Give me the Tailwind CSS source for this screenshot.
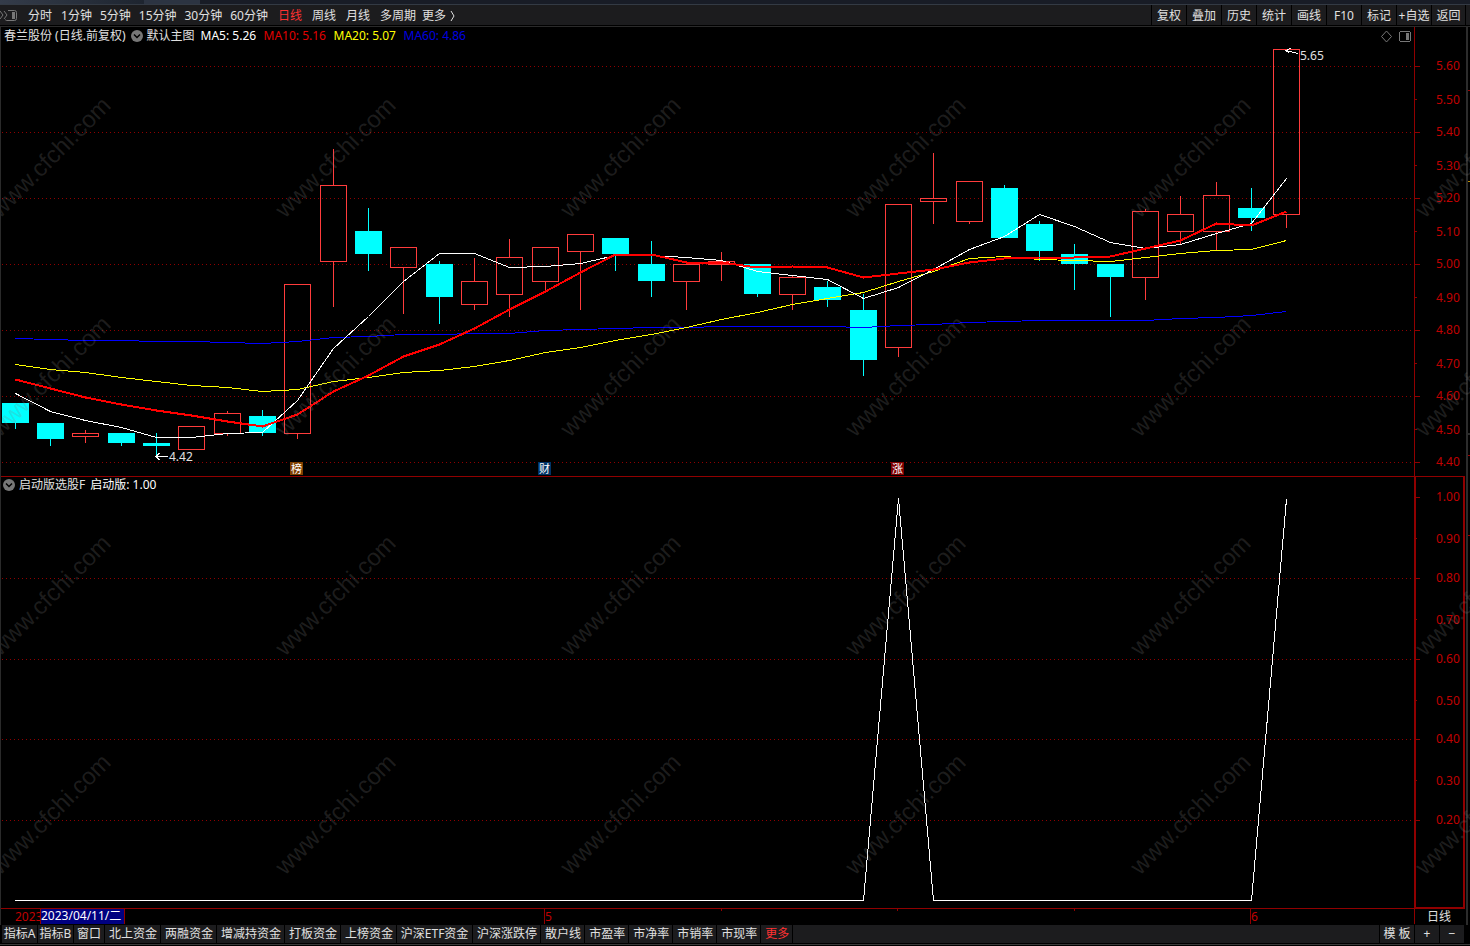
<!DOCTYPE html>
<html lang="zh-CN">
<head>
    <meta charset="UTF-8">
    <meta name="viewport" content="width=device-width, initial-scale=1.0">
    <title>春兰股份 日线</title>
    <script src="https://cdn.jsdelivr.net/npm/@tailwindcss/browser@4"></script>
</head>
<body class="min-h-screen bg-black text-[#e0e0e0] text-[12px] leading-[16px] font-['Noto_Sans','Noto_Sans_CJK_SC',sans-serif] overflow-x-hidden">
    <div class="h-[5px] bg-[#181c26] border-b border-[#333a44] flex">
        <div class="w-36 bg-linear-to-r from-[#343c4a] to-[#1e2530]"></div>
        <div class="w-14 bg-[#2c3442]"></div>
    </div>

    <header class="h-[21px] bg-[#1c1c1e] flex items-center justify-between border-b border-black pr-1">
        <nav class="flex items-center gap-[10px] pt-px whitespace-nowrap">
            <div class="flex items-center gap-2">
                <button type="button" aria-label="侧栏" class="w-5">
                    <svg class="w-5 h-4" viewBox="0 0 20 16" fill="none" stroke="#777">
                        <path d="M0 3l3 4-3 4M4 3l3 4-3 4"/>
                        <path d="M8 2.500h6.500q2 0 2 2v6q0 2-2 2h-8q-1 0-1-1"/>
                        <path d="M12 4h3v7h-3z" fill="#777" stroke="none"/>
                    </svg>
                </button>
                <button type="button" class="mr-px">分时</button>
                <button type="button">1分钟</button>
                <button type="button">5分钟</button>
                <button type="button">15分钟</button>
                <button type="button">30分钟</button>
                <button type="button">60分钟</button>
            </div>
            <button type="button" class="text-[#ff3232]">日线</button>
            <button type="button">周线</button>
            <button type="button">月线</button>
            <button type="button">多周期</button>
            <button type="button" class="-ml-1 flex items-center gap-1">更多
                <svg class="w-2 h-3" viewBox="0 0 8 12" fill="none" stroke="#e0e0e0"><path d="M1 1l3 5-3 5"/></svg>
            </button>
        </nav>
        <div class="flex h-full whitespace-nowrap">
            <button type="button" class="w-[35px] pt-px border-l border-black">复权</button>
            <button type="button" class="w-[35px] pt-px border-l border-black">叠加</button>
            <button type="button" class="w-[35px] pt-px border-l border-black">历史</button>
            <button type="button" class="w-[35px] pt-px border-l border-black">统计</button>
            <button type="button" class="w-[35px] pt-px border-l border-black">画线</button>
            <button type="button" class="w-[35px] pt-px border-l border-black">F10</button>
            <button type="button" class="w-[35px] pt-px border-l border-black">标记</button>
            <button type="button" class="w-[35px] pt-px border-l border-black">+自选</button>
            <button type="button" class="w-[35px] pt-px border-x border-black">返回</button>
        </div>
    </header>

    <main class="relative flex border-t border-l border-[#2a2a2a]">
        <div class="flex-1 min-w-0">
            <section class="relative">
                <div class="absolute inset-x-0 top-0 flex items-center pl-[3px] h-[18px] whitespace-nowrap">
                    <h1>春兰股份 (日线.前复权)</h1>
                    <button type="button" aria-label="主图菜单" class="ml-[5px] mr-1">
                        <svg class="w-3 h-3" viewBox="0 0 12 12"><circle cx="6" cy="6" r="6" fill="#777"/><path d="M3 4.500l3 3 3-3" fill="none" stroke="#000" stroke-width="1.500"/></svg>
                    </button>
                    <span class="w-[54px]">默认主图</span>
                    <span class="w-[63px] text-white">MA5: 5.26</span>
                    <span class="w-[70px] text-[#e00000]">MA10: 5.16</span>
                    <span class="w-[70px] text-[#ffff00]">MA20: 5.07</span>
                    <span class="w-[70px] text-[#0000e0]">MA60: 4.86</span>
                </div>
                <svg id="price" class="block w-full h-auto" viewBox="1 27 1465 450"></svg>
            </section>
            <section class="relative">
                <div class="absolute inset-x-0 top-0 flex items-center pl-[2px] h-4 whitespace-nowrap">
                    <button type="button" aria-label="指标菜单" class="mr-1">
                        <svg class="w-3 h-3" viewBox="0 0 12 12"><circle cx="6" cy="6" r="6" fill="#777"/><path d="M3 4.500l3 3 3-3" fill="none" stroke="#000" stroke-width="1.500"/></svg>
                    </button>
                    <h2 class="mr-[5px]">启动版选股F</h2>
                    <span class="text-white">启动版: 1.00</span>
                </div>
                <svg id="signal" class="block w-full h-auto" viewBox="1 477 1465 448"></svg>
            </section>
        </div>
        <svg class="w-1 shrink-0" viewBox="0 0 4 898" preserveAspectRatio="none" shape-rendering="crispEdges">
            <path d="M0 0h2v898h-2z" fill="#2c2c2c"/>
            <path d="M2 63h2v1h-2zM2 428h2v1h-2zM2 508h2v1h-2z" fill="#a00000"/>
            <path d="M2 154h2v1h-2z" fill="#c09000"/>
            <path d="M2 406h2v2h-2z" fill="#2c2c2c"/>
        </svg>
        <svg id="watermark" class="absolute inset-0 w-full h-full pointer-events-none" viewBox="1 27 1469 898" aria-hidden="true"></svg>
    </main>

    <footer class="flex h-5 pl-[2px] pr-[6px] border-b border-[#3a3a3a] bg-black whitespace-nowrap">
        <div class="flex flex-1 h-[18px] bg-[#1c1c1e]">
            <button type="button" class="w-9 border-r border-black">指标A</button>
            <button type="button" class="w-9 border-r border-black">指标B</button>
            <button type="button" class="px-[3px] border-r border-black">窗口</button>
            <button type="button" class="pl-1 pr-[3px] border-r border-black">北上资金</button>
            <button type="button" class="pl-1 pr-[3px] border-r border-black">两融资金</button>
            <button type="button" class="pl-1 pr-[3px] border-r border-black">增减持资金</button>
            <button type="button" class="pl-1 pr-[3px] border-r border-black">打板资金</button>
            <button type="button" class="pl-1 pr-[3px] border-r border-black">上榜资金</button>
            <button type="button" class="w-[76px] border-r border-black">沪深ETF资金</button>
            <button type="button" class="pl-1 pr-[3px] border-r border-black">沪深涨跌停</button>
            <button type="button" class="pl-1 pr-[3px] border-r border-black">散户线</button>
            <button type="button" class="pl-1 pr-[3px] border-r border-black">市盈率</button>
            <button type="button" class="pl-1 pr-[3px] border-r border-black">市净率</button>
            <button type="button" class="pl-1 pr-[3px] border-r border-black">市销率</button>
            <button type="button" class="pl-1 pr-[3px] border-r border-black">市现率</button>
            <button type="button" class="pl-1 pr-[3px] border-r border-black text-[#ff3232]">更多</button>
            <button type="button" class="ml-auto w-9 border-x border-black">模 板</button>
            <button type="button" class="w-[25px] border-r border-black">+</button>
            <button type="button" class="w-6">−</button>
        </div>
    </footer>

    <script>
        // left edge, body top, body bottom, high, low, 1 = up
        const candles = [
            [2, 403, 423, 403, 429, 0], [37, 423, 439, 423, 446, 0], [72, 433, 436, 430, 443, 1],
            [108, 433, 443, 433, 446, 0], [143, 443, 446, 433, 456, 0], [178, 426, 449, 426, 449, 1],
            [214, 413, 433, 411, 436, 1], [249, 416, 433, 410, 436, 0], [284, 284, 433, 284, 439, 1],
            [320, 185, 261, 149, 307, 1], [355, 231, 254, 208, 271, 0], [390, 247, 267, 247, 314, 1],
            [426, 264, 297, 261, 324, 0], [461, 281, 304, 258, 310, 1], [496, 257, 294, 239, 317, 1],
            [532, 247, 281, 247, 293, 1], [567, 234, 251, 234, 310, 1], [602, 238, 254, 238, 271, 0],
            [638, 264, 281, 241, 297, 0], [673, 264, 281, 264, 310, 1], [708, 261, 264, 252, 281, 1],
            [744, 264, 294, 264, 297, 0], [779, 277, 294, 275, 310, 1], [814, 287, 300, 281, 307, 0],
            [850, 310, 360, 294, 376, 0], [885, 204, 347, 204, 357, 1], [920, 198, 201, 153, 224, 1],
            [956, 181, 221, 181, 224, 1], [991, 188, 238, 185, 238, 0], [1026, 224, 251, 221, 261, 0],
            [1061, 254, 264, 244, 290, 0], [1097, 264, 277, 264, 317, 0], [1132, 211, 277, 209, 300, 1],
            [1167, 214, 231, 196, 244, 1], [1203, 195, 231, 182, 250, 1], [1238, 208, 218, 188, 231, 0],
            [1273, 49, 214, 49, 228, 1]
        ];
        const ma5 = [393, 411, 420, 427, 437, 437, 433, 432, 400, 348, 316, 281, 253, 253, 267, 266, 263, 255, 255, 257, 260, 271, 275, 279, 298, 287, 269, 249, 236, 214, 226, 242, 248, 244, 233, 223, 178];
        const ma10 = [379, 388, 397, 404, 410, 415, 421, 426, 414, 391, 375, 356, 344, 328, 309, 291, 272, 254, 254, 262, 262, 267, 266, 267, 277, 273, 269, 262, 258, 257, 257, 256, 248, 240, 223, 225, 211];
        const ma20 = [364, 369, 372, 377, 381, 385, 387, 391, 389, 381, 377, 372, 370, 366, 360, 352, 347, 340, 334, 327, 319, 312, 304, 298, 292, 281, 271, 258, 256, 259, 260, 261, 257, 253, 250, 249, 240];
        const ma60 = [338, 339, 340, 340, 341, 341, 342, 343, 341, 337, 336, 334, 334, 333, 333, 330, 329, 328, 327, 327, 326, 326, 326, 326, 327, 325, 324, 322, 321, 320, 320, 320, 320, 318, 317, 315, 311];

        const rect = (x, y, w, h, fill) => `<rect x="${x}" y="${y}" width="${w}" height="${h}" fill="${fill}"/>`;
        const label = (x, y, text, fill) => `<text x="${x}" y="${y}" fill="${fill}">${text}</text>`;
        const line = (ys, color, width) => {
            const points = ys.map((y, i) => `${candles[i][0] + 13.5},${y + 0.5}`).join(" ");
            return `<polyline points="${points}" fill="none" stroke="${color}" stroke-width="${width}"/>`;
        };
        const grid = y => `<path d="M2 ${y + 0.5}H1414" stroke="#900000" stroke-dasharray="1 3"/>`;
        const badge = (x, text, fill) => rect(x, 462, 13, 13, fill) + `<text x="${x + 1}" y="473" font-size="11" fill="#fff">${text}</text>`;

        // price panel
        let price = "";
        for (let i = 0; i < 13; i++) {
            const y = 66 + i * 33;
            if (i % 2 === 0) price += grid(y);
            price += rect(1415, y, i % 2 ? 2 : 5, 1, "#900000");
            price += label(1436, y + (i % 2 ? 5 : 4), (5.6 - i * 0.1).toFixed(2), "#c00000");
        }
        price += rect(1414, 27, 1, 450, "#900000") + rect(1, 476, 1414, 1, "#900000") + rect(1414, 476, 51, 2, "#900000");
        for (const [x, top, bottom, high, low, up] of candles) {
            if (up) {
                price += rect(x + 13, high, 1, top - high, "#ff3c3c") + rect(x + 13, bottom, 1, low - bottom, "#ff3c3c");
                price += `<rect x="${x + 0.5}" y="${top + 0.5}" width="26" height="${bottom - top}" fill="none" stroke="#ff3c3c"/>`;
            } else {
                price += rect(x, top, 27, bottom - top, "#00ffff") + rect(x + 13, high, 1, low - high, "#00ffff");
            }
        }
        price += line(ma60, "#0000ff", 1) + line(ma20, "#ffff00", 1) + line(ma5, "#ffffff", 1) + line(ma10, "#ff0000", 2);
        price += `<path d="M156 456.500h12M159.500 453l-3.500 3.500 3.500 3.500M1298 53.500l-12-3M1290.500 48.500l-4.500 2 3.500 3" fill="none" stroke="#fff"/>`;
        price += label(169, 461, "4.42", "#e0e0e0") + label(1300, 60, "5.65", "#e0e0e0");
        price += badge(290, "榜", "#804000") + badge(538, "财", "#003366") + badge(891, "涨", "#800000");
        price += `<path d="M1386.500 31l5 5.500-5 5.500-5-5.500z" fill="none" stroke="#777" shape-rendering="auto"/>`;
        price += `<rect x="1399.500" y="31.500" width="11" height="10" rx="2" fill="none" stroke="#777"/>` + rect(1406, 33, 3, 7, "#777");
        document.getElementById("price").innerHTML = `<g shape-rendering="crispEdges">${price}</g>`;

        // signal panel with the date axis under it
        let signal = "";
        [497, 538, 578, 619, 659, 700, 739, 780, 820].forEach((y, i) => {
            if (i % 2 === 0 && i > 0) signal += grid(y);
            signal += rect(1415, y, i % 2 ? 2 : 5, 1, "#900000");
            signal += label(1436, y + (i % 2 ? 5 : 4), (1 - i * 0.1).toFixed(2), "#c00000");
        });
        signal += rect(1, 908, 1414, 1, "#900000") + rect(1414, 477, 2, 431, "#900000") + rect(1463, 477, 2, 431, "#900000") + rect(1414, 907, 51, 2, "#900000") + rect(1414, 908, 1, 16, "#900000");
        signal += `<path d="M15 900.500H863.500L898.500 498 933.500 900.500H1251.500L1286.500 499" fill="none" stroke="#fff"/>`;
        signal += [721, 897, 1074].map(x => rect(x, 909, 1, 2, "#900000")).join("");
        signal += rect(544, 909, 1, 15, "#900000") + rect(1250, 909, 1, 15, "#900000");
        signal += label(15, 921, "2023", "#c00000") + label(545, 921, "5", "#c00000") + label(1251, 921, "6", "#c00000");
        signal += rect(40, 909, 85, 15, "#900000") + rect(41, 909, 83, 15, "#000080") + label(41, 920, "2023/04/11/二", "#fff");
        signal += label(1427, 921, "日线", "#e0e0e0");
        document.getElementById("signal").innerHTML = `<g shape-rendering="crispEdges">${signal}</g>`;

        let marks = "";
        for (let row = 0; row < 4; row++) {
            for (let col = 0; col < 6; col++) {
                marks += `<text transform="translate(${col * 285} ${219 + row * 219}) rotate(-45)">www.cfchi.com</text>`;
            }
        }
        document.getElementById("watermark").innerHTML = `<g font-family="Liberation Sans" font-size="24" fill="#808080" fill-opacity="0.23">${marks}</g>`;
    </script>
</body>
</html>
